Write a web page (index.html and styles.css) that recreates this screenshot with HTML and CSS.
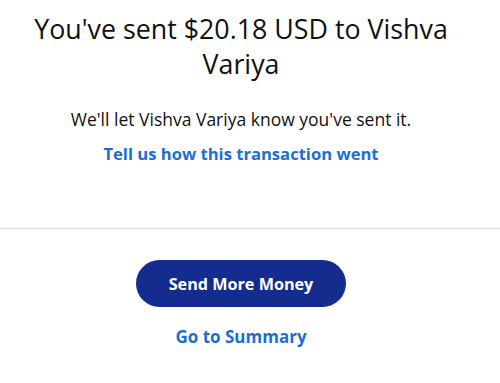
FILE: index.html
```html
<!DOCTYPE html>
<html>
<head>
<meta charset="utf-8">
<link rel="stylesheet" href="styles.css">
</head>
<body>
<main class="page">
  <section class="top">
    <h1 class="title">You've sent $20.18 USD to Vishva Variya</h1>
    <p class="note">We'll let Vishva Variya know you've sent it.</p>
    <a class="link feedback" href="#">Tell us how this transaction went</a>
  </section>
  <hr class="divider">
  <section class="actions">
    <button class="primary" type="button">Send More Money</button>
    <a class="link summary" href="#">Go to Summary</a>
  </section>
</main>
</body>
</html>
```
FILE: styles.css
```css
html, body {
  margin: 0;
  padding: 0;
  background: #fff;
}
body {
  font-family: "Open Sans", "Noto Sans", sans-serif;
  color: #111;
  width: 500px;
}
.page {
  display: flex;
  flex-direction: column;
}
.top {
  display: flex;
  flex-direction: column;
  align-items: center;
  padding: 0 18px 0 0;
}
.title {
  margin: 11px 0 0;
  max-width: 440px;
  font-size: 26.8px;
  font-weight: 400;
  line-height: 35px;
  text-align: center;
}
.note {
  margin: 27px 0 0;
  font-size: 17.5px;
  line-height: 22px;
}
.link {
  color: #1b6fd3;
  font-weight: 700;
  text-decoration: none;
  line-height: 22px;
}
.feedback {
  margin-top: 13px;
  font-size: 16.6px;
}
.divider {
  margin: 63px 0 0;
  border: 0;
  border-top: 1px solid #dcdcdc;
  height: 0;
}
.actions {
  display: flex;
  flex-direction: column;
  align-items: center;
  padding-right: 18px;
}
.primary {
  margin-top: 31px;
  width: 210px;
  height: 47px;
  border: 0;
  border-radius: 24px;
  background: #142c8e;
  color: #fff;
  font-family: inherit;
  font-size: 16.2px;
  font-weight: 700;
}
.summary {
  margin-top: 19px;
  font-size: 17px;
}
```
